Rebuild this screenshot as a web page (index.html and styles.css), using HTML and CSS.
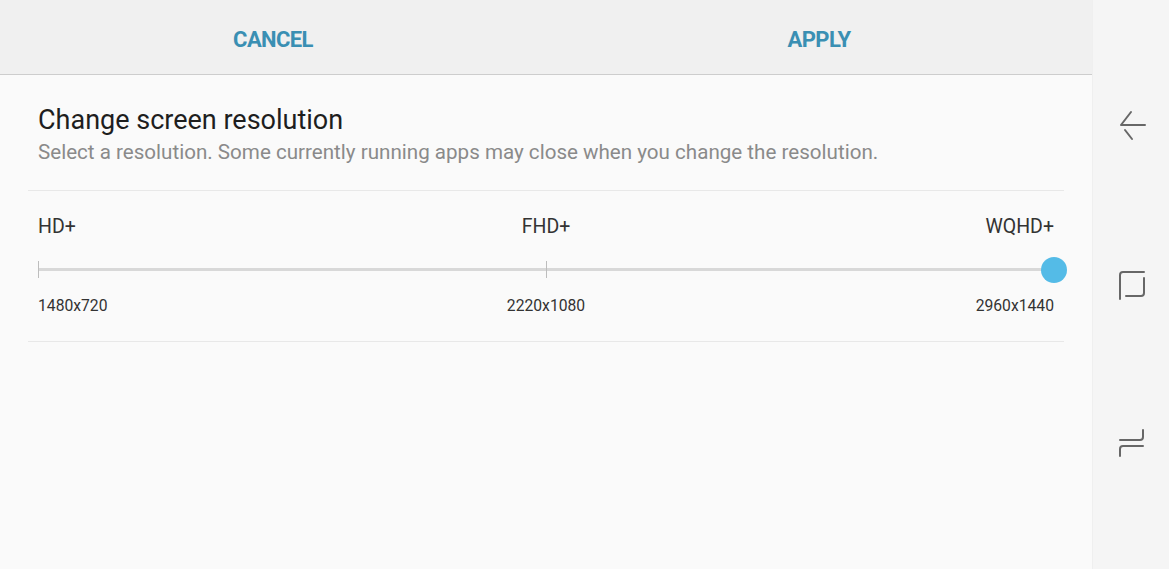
FILE: index.html
```html
<!DOCTYPE html>
<html lang="en">
<head>
    <meta charset="UTF-8">
    <meta name="viewport" content="width=device-width, initial-scale=1.0">
    <title>Screen resolution</title>
    <link rel="stylesheet" href="styles.css">
</head>
<body>
    <div class="screen">
        <main class="main">
            <header class="actions">
                <button class="action">CANCEL</button>
                <button class="action">APPLY</button>
            </header>

            <section class="content">
                <h1 class="title">Change screen resolution</h1>
                <p class="subtitle">Select a resolution. Some currently running apps may close when you change the resolution.</p>

                <div class="picker">
                    <div class="row labels">
                        <span>HD+</span>
                        <span>FHD+</span>
                        <span>WQHD+</span>
                    </div>
                    <div class="slider">
                        <div class="track"></div>
                        <span class="tick tick-start"></span>
                        <span class="tick tick-mid"></span>
                        <span class="knob"></span>
                    </div>
                    <div class="row values">
                        <span>1480x720</span>
                        <span>2220x1080</span>
                        <span>2960x1440</span>
                    </div>
                </div>
            </section>
        </main>

        <!-- Навигационная панель -->
        <nav class="navbar">
            <svg class="nav-icon" width="40" height="40" viewBox="0 0 40 40">
                <path d="M10 21 L20 8 M10 21 H34 M14 26 L21 35" />
            </svg>
            <svg class="nav-icon" width="40" height="40" viewBox="0 0 40 40">
                <path d="M9 35 V11 A3 3 0 0 1 12 8 H33 M33 14 V29 A3 3 0 0 1 30 32 H15" />
            </svg>
            <svg class="nav-icon" width="40" height="40" viewBox="0 0 40 40">
                <path d="M32 6 V13 A3 3 0 0 1 29 16 H9 M32 22 H12 A3 3 0 0 0 9 25 V32" />
            </svg>
        </nav>
    </div>
</body>
</html>
```

FILE: styles.css
```css
/* Общие стили */
body {
    margin: 0;
    font-family: Roboto, 'Noto Sans', sans-serif;
    background: #fafafa;
    color: #222;
}

.screen {
    display: flex;
    width: 1169px;
    height: 569px;
    overflow: hidden;
}

.main {
    flex: 1;
    background: #fafafa;
}

/* Кнопки сверху */
.actions {
    display: flex;
    height: 74px;
    background: #f0f0f0;
    border-bottom: 1px solid #cdcdcd;
}

.action {
    flex: 1;
    border: none;
    background: none;
    font-family: Roboto, sans-serif;
    font-weight: 700;
    font-size: 22px;
    letter-spacing: -0.6px;
    color: #3a8fb3;
    padding: 4px 0 0;
    cursor: pointer;
}

/* Контент */
.content {
    margin: 0 28px 0 28px;
    padding-top: 29px;
}

.title {
    margin: 0;
    padding: 0 10px;
    font-size: 27px;
    font-weight: 400;
    line-height: 32px;
    color: #1e1e1e;
}

.subtitle {
    margin: 0;
    padding: 0 10px 22px;
    font-size: 20.6px;
    line-height: 32px;
    color: #8a8a8a;
    border-bottom: 1px solid #e8e8e8;
}

.picker {
    padding: 21px 10px 25px;
    border-bottom: 1px solid #e8e8e8;
}

.row {
    display: grid;
    grid-template-columns: 1fr 1fr 1fr;
}

.row span:nth-child(2) {
    justify-self: center;
}

.row span:nth-child(3) {
    justify-self: end;
}

.labels {
    font-size: 19.5px;
    line-height: 30px;
    color: #333;
}

.values {
    font-size: 15.7px;
    line-height: 20px;
    color: #333;
}

/* Слайдер */
.slider {
    position: relative;
    height: 26px;
    margin: 15px 0 13px;
}

.track {
    position: relative;
    top: 11px;
    height: 3px;
    background: #d8d8d8;
}

.tick {
    position: absolute;
    top: 4px;
    width: 1px;
    height: 17px;
    background: #bdbdbd;
}

.tick-start {
    left: 0;
}

.tick-mid {
    left: 50%;
}

.knob {
    position: absolute;
    right: -13px;
    top: 0;
    width: 26px;
    height: 26px;
    border-radius: 50%;
    background: #54bbe7;
}

/* Навигационная панель */
.navbar {
    width: 76px;
    background: #f5f5f5;
    border-left: 1px solid #efefef;
    display: flex;
    flex-direction: column;
    align-items: center;
    padding-top: 104px;
    gap: 120px;
}

.nav-icon path {
    fill: none;
    stroke: #676767;
    stroke-width: 2;
    stroke-linecap: round;
}
```
